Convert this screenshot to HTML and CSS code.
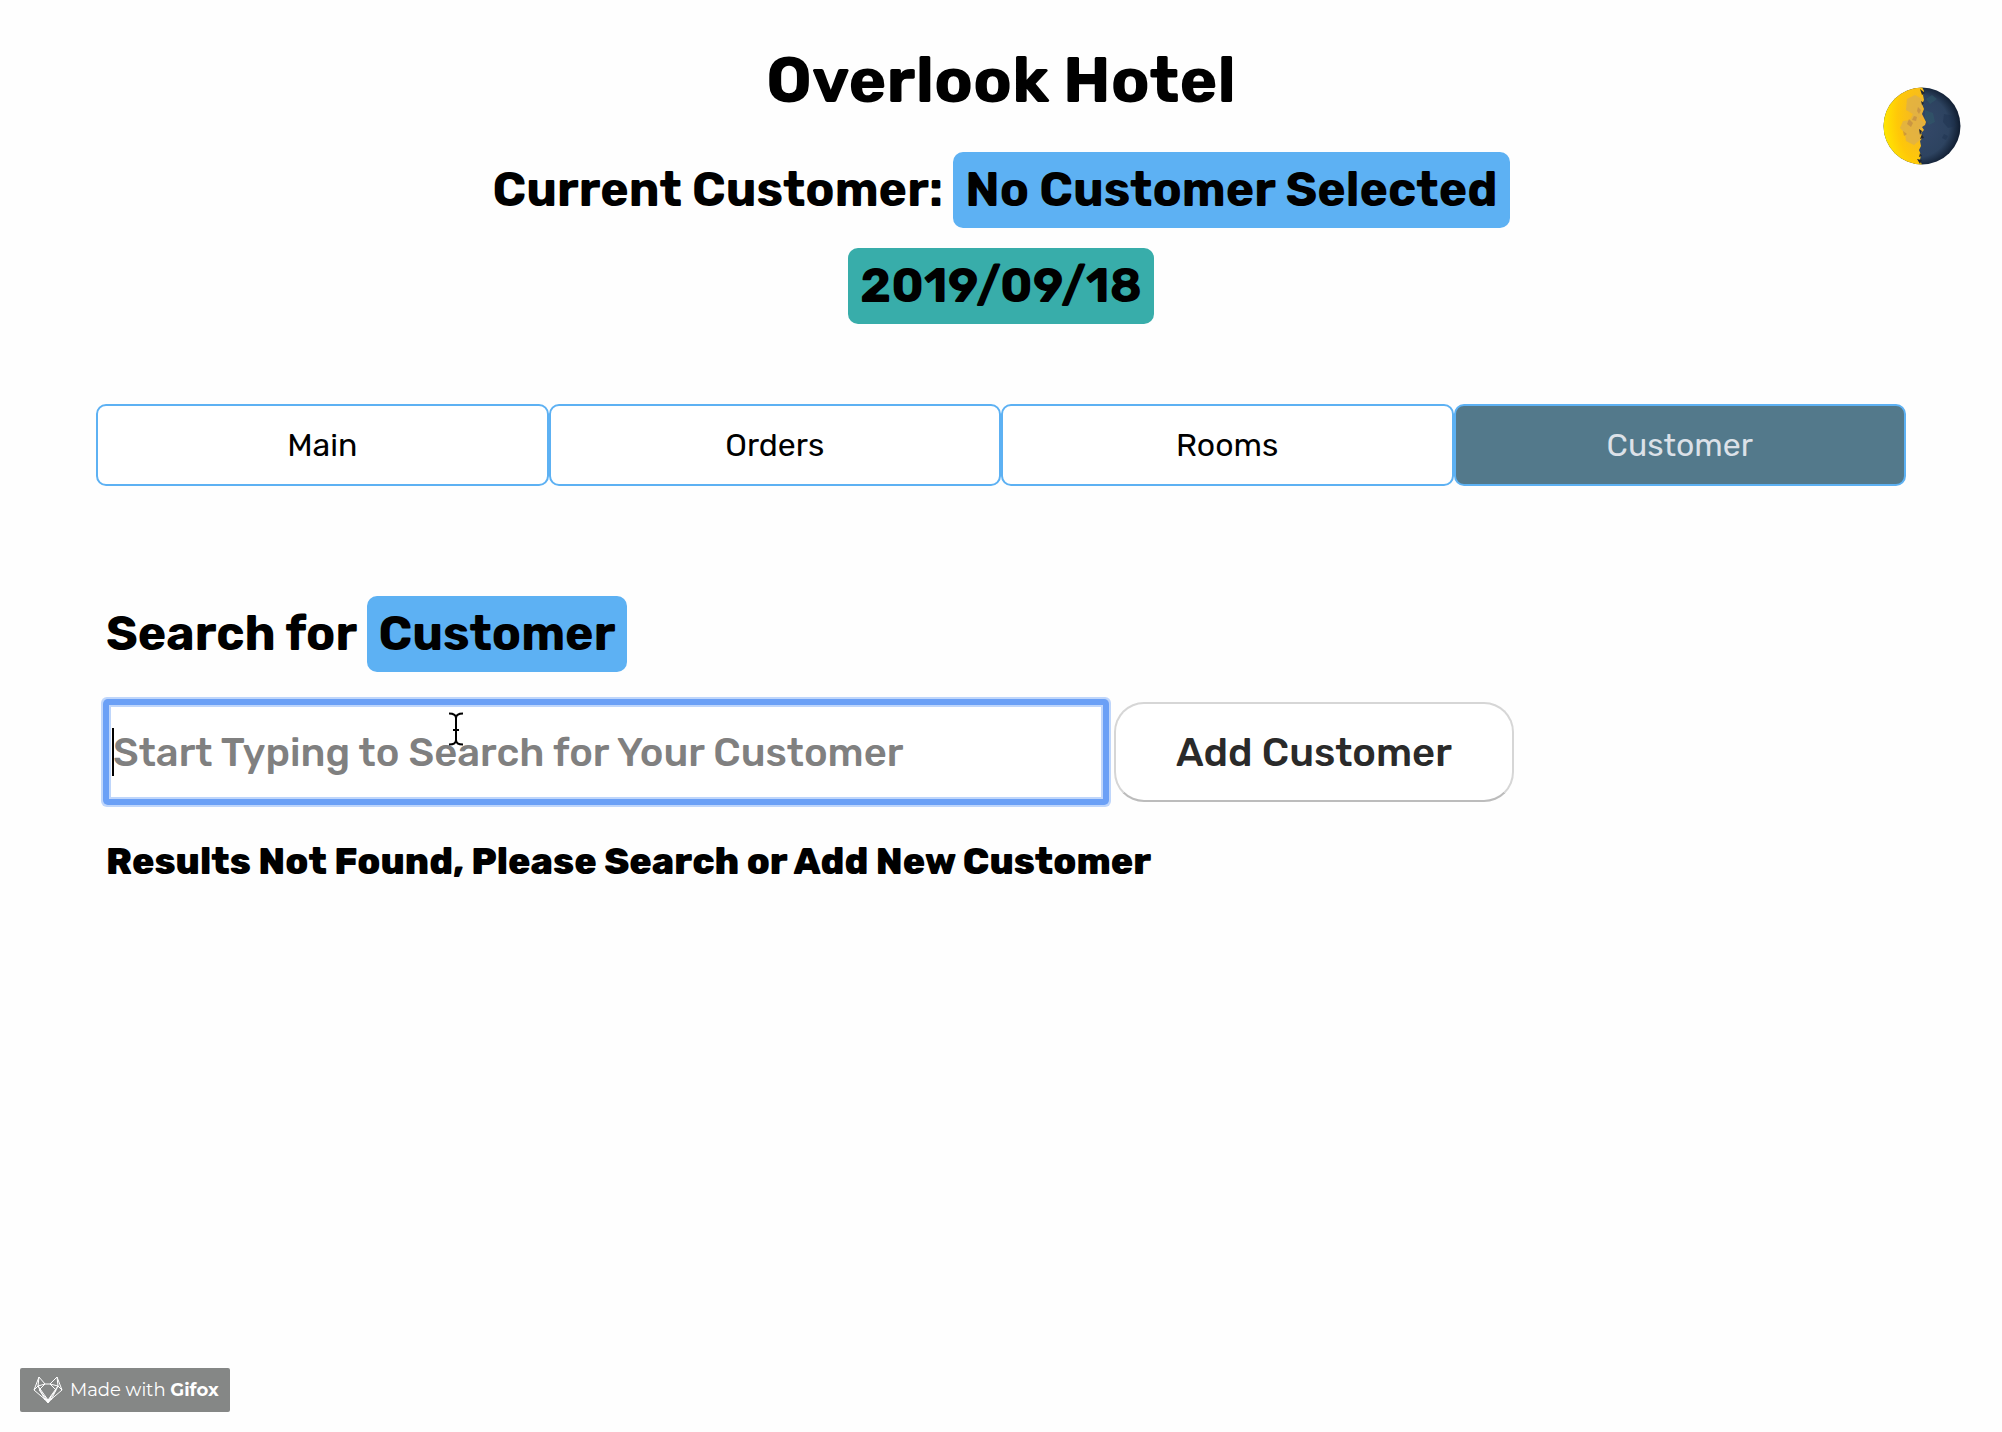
FILE: index.html
```html
<!DOCTYPE html>
<html lang="en">
<head>
<meta charset="utf-8">
<meta name="viewport" content="width=device-width, initial-scale=1">
<title>Overlook Hotel</title>
<link rel="stylesheet" href="styles.css">
</head>
<body>
<header class="header">
  <h1 class="title">Overlook Hotel</h1>
  <h2 class="heading">Current Customer: <span class="tag">No Customer Selected</span></h2>
  <h2 class="heading"><span class="tag tag-date">2019/09/18</span></h2>
  <button class="theme-toggle" type="button" aria-label="Toggle dark mode">
    <svg viewBox="0 0 78 78" width="78" height="78" aria-hidden="true">
      <defs>
        <radialGradient id="lit" cx="0.9" cy="0.4" r="0.95"><stop offset="0" stop-color="#f0b030"/><stop offset="0.6" stop-color="#ffc808"/><stop offset="1" stop-color="#ffec00"/></radialGradient>
        <radialGradient id="dark" cx="0.45" cy="0.5" r="0.53"><stop offset="0" stop-color="#35496a"/><stop offset="0.75" stop-color="#2d4360"/><stop offset="1" stop-color="#122034"/></radialGradient>
        <clipPath id="disc"><circle cx="39" cy="39" r="38.500"/></clipPath>
      </defs>
      <g clip-path="url(#disc)">
        <rect width="78" height="78" fill="url(#dark)"/>
        <path d="M0 0H39L41 4L40 8L41 13L39 17L41 22L39 27L41 31L43 35L42 38L39 40L41 43L38 46L40 50L37 54L38 59L36 63L38 68L37 73L39 78H0Z" fill="url(#lit)"/>
        <path d="M24 12L32 8L39 12V26L36 32L42 36L38 41L37 53L31 58L23 54L22 46L17 41L20 34L27 33L30 27L23 23Z" fill="#dfb048" opacity=".8"/>
        <path d="M31 29l3 1-1 4-4-1zM26 32l4 4-2 4-4-3zM35 20l3 3-2 4-2-3zM20 44l4 3-3 2z" fill="#b98345" opacity=".6"/>
        <path d="M42 23l8 3 2 9-6 3-4-6zM43 12l6-4 5 4-7 5z" fill="#30606a" opacity=".45"/>
        <path d="M61 27l10 2 1 10-7 2-5-6zM61 47l4 2-2 4-4-2z" fill="#1c304d" opacity=".45"/>
        <path d="M37 2l5 4-3 2zM36 42l3 2-2 4zM39 47l2 4-4 1zM34 72l5 1-2 4zM37 66l2 3-3 1zM38 14l3 2-2 2z" fill="#232831"/>
      </g>
    </svg>
  </button>
</header>

<nav class="tabs">
  <button class="tab" type="button">Main</button>
  <button class="tab" type="button">Orders</button>
  <button class="tab" type="button">Rooms</button>
  <button class="tab tab-active" type="button" aria-current="page">Customer</button>
</nav>

<main class="search">
  <h2 class="heading"><label for="customer-search">Search for <span class="tag">Customer</span></label></h2>
  <form class="search-form">
    <div class="field">
      <input class="search-input" id="customer-search" type="text" placeholder="Start Typing to Search for Your Customer">
      <span class="caret"></span>
      <svg class="pointer" viewBox="0 0 16 34" width="16" height="34" aria-hidden="true">
        <path d="M1 1.500C5 1.500 8 3 8 6V28C8 31 5 32.500 1 32.500M15 1.500C11 1.500 8 3 8 6V28C8 31 11 32.500 15 32.500M5 18H11" fill="none" stroke="#000" stroke-width="2"/>
      </svg>
    </div>
    <button class="add-button" type="button">Add Customer</button>
  </form>
  <h3 class="results">Results Not Found, Please Search or Add New Customer</h3>
</main>

<footer class="footer">
  <a class="gifox" href="#">
    <svg viewBox="0 0 30 28" width="30" height="28" aria-hidden="true">
      <path d="M6 1L1 14L15 26L29 14L24 1L17 8H12ZM6 1L5 10L12 8M24 1L25 10L17 8M1 14L5 10L15 24L25 10L29 14M5 10L12 24M12 8L6 14L15 25L23 14L17 8M25 10L18 24" fill="none" stroke="#fff" stroke-width="1"/>
      <path d="M11 22L15 24L19 22L15 27Z" fill="#fff" stroke="#fff"/>
    </svg>
    <span>Made with <strong>Gifox</strong></span>
  </a>
</footer>
</body>
</html>
```
FILE: styles.css
```css
* { box-sizing: border-box; }

body {
  margin: 0;
  min-height: 100vh;
  display: flex;
  flex-direction: column;
  background: #fefefe;
  color: #000;
  font-family: Rubik, Inter, "Liberation Sans", sans-serif;
}

h1, h2, h3 { margin: 0; font-weight: 700; }
button, input { font-family: inherit; }

.header {
  position: relative;
  display: flex;
  flex-direction: column;
  align-items: center;
  gap: 20px;
  padding-top: 42px;
}

.title { font-size: 64px; line-height: 76px; margin-bottom: 14px; }

.heading { font-size: 48px; line-height: 76px; }

.tag {
  display: inline-block;
  padding: 0 12px;
  border-radius: 10px;
  background: #5db1f3;
}

.tag-date { background: #38adaa; }

.theme-toggle {
  position: absolute;
  top: 87px;
  right: 41px;
  padding: 0;
  border: 0;
  background: none;
}

.theme-toggle svg { display: block; }

.tabs { display: flex; margin: 80px 96px 0; }

.tab {
  flex: 1;
  height: 82px;
  border: 2px solid #5db1f3;
  border-radius: 10px;
  background: #fff;
  color: #000;
  font-size: 32px;
}

.tab-active { background: #53798b; color: #dce1e8; }

.search { padding: 110px 96px 40px 106px; }

.search-form { display: flex; gap: 8px; margin-top: 30px; }

.field { position: relative; flex: 0 1 1000px; }

.search-input {
  display: block;
  width: 100%;
  height: 100px;
  padding: 0 4px;
  border: 3px solid #6ba0f6;
  border-radius: 2px;
  outline: 0;
  background: #fff;
  box-shadow: 0 0 0 3px #6ba0f6, 0 0 0 5px #bfd6fb, inset 0 0 0 2px #bfd6fb;
  font-size: 40px;
  font-weight: 500;
}

.search-input::placeholder { color: #808080; opacity: 1; }

.caret {
  position: absolute;
  top: 26px;
  left: 6px;
  width: 2px;
  height: 48px;
  background: #000;
}

.pointer { position: absolute; top: 10px; left: 342px; }

.add-button {
  flex: 0 0 400px;
  border: 2px solid #d6d6d6;
  border-bottom-color: #bcbcbc;
  border-radius: 30px;
  background: #fff;
  color: #2a2a2a;
  font-size: 40px;
  font-weight: 500;
}

.results { margin-top: 36px; font-size: 37px; font-weight: 800; line-height: 46px; }

.footer { display: flex; margin-top: auto; padding: 20px; }

.gifox {
  display: flex;
  align-items: center;
  gap: 7px;
  width: 210px;
  height: 44px;
  padding-left: 13px;
  border-radius: 2px;
  background: #858786;
  color: #fff;
  font-family: Montserrat, Rubik, sans-serif;
  font-size: 18px;
  text-decoration: none;
  white-space: nowrap;
}
```
